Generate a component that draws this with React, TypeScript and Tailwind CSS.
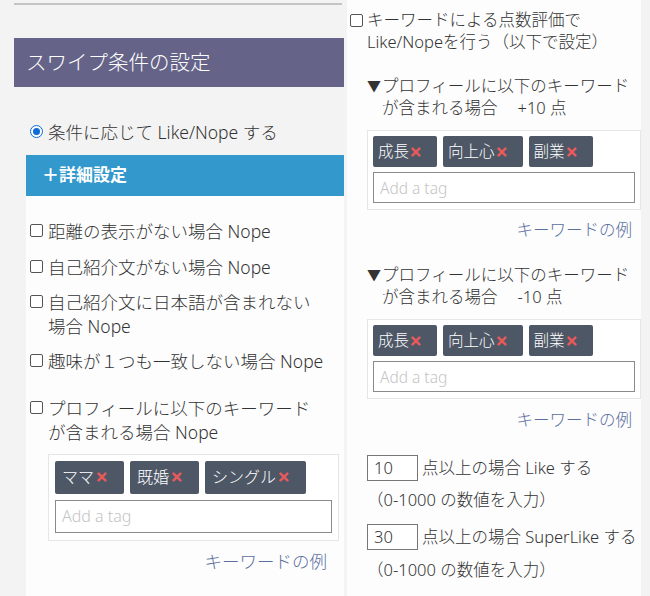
import React from "react";

const FONT = '"Noto Sans", "Noto Sans CJK JP", "Liberation Sans", sans-serif';

function XMark() {
  return (
    <svg width="10" height="10" viewBox="0 0 10 10" className="shrink-0">
      <path d="M1.6 1.6 L8.4 8.4 M8.4 1.6 L1.6 8.4" stroke="#e65a5c" strokeWidth="2.6" strokeLinecap="round" />
    </svg>
  );
}

function Tag({ label, big }: { label: string; big?: boolean }) {
  return (
    <div
      className={
        big
          ? "flex h-[33px] items-center gap-[3px] rounded-[2px] bg-[#4d5766] pl-[7px] pr-[17px] text-[16px] leading-none text-white"
          : "flex h-[31px] items-center gap-[2px] rounded-[2px] bg-[#4d5766] pl-[5px] pr-[16px] text-[15.5px] leading-none text-white"
      }
    >
      <span>{label}</span>
      <XMark />
    </div>
  );
}

function Checkbox() {
  return <span className="inline-block h-[13px] w-[13px] shrink-0 rounded-[2px] border border-[#555] bg-white" />;
}

function LeftItem({ lines, className = "" }: { lines: string[]; className?: string }) {
  return (
    <div className={"flex items-start pl-[4px] " + className}>
      <div className="flex h-[24px] items-center">
        <Checkbox />
      </div>
      <div className="ml-[5px] flex flex-col text-[17.5px] leading-[24px] text-[#333]">
        {lines.map((l) => (
          <div key={l}>{l}</div>
        ))}
      </div>
    </div>
  );
}

function TagBox({ tags, big }: { tags: string[]; big?: boolean }) {
  return (
    <div
      className={
        big
          ? "flex flex-col gap-[6px] border border-[#e6e6e6] bg-white px-[6px] pb-[7px] pt-[6px]"
          : "flex flex-col gap-[5px] border border-[#e6e6e6] bg-white px-[5px] pb-[6px] pt-[5px]"
      }
    >
      <div className="flex gap-[6px]">
        {tags.map((t) => (
          <Tag key={t} label={t} big={big} />
        ))}
      </div>
      <div
        className={
          big
            ? "flex h-[33px] items-center border-[1.5px] border-[#8a8a8a] bg-white pl-[6px] text-[16px] text-[#c4c4c4]"
            : "flex h-[31px] items-center border-[1.5px] border-[#8a8a8a] bg-white pl-[6px] text-[15.5px] text-[#c4c4c4]"
        }
      >
        Add a tag
      </div>
    </div>
  );
}

function Section({ score }: { score: string }) {
  return (
    <div className="flex text-[16.5px] leading-[22px] text-[#333]">
      <div className="w-[15px] shrink-0 text-[14px]">▼</div>
      <div className="flex flex-col">
        <div>プロフィールに以下のキーワード</div>
        <div>
          が含まれる場合<span className="ml-[20px]">{score} 点</span>
        </div>
      </div>
    </div>
  );
}

export default function App() {
  return (
    <div className="flex h-[596px] w-[650px] overflow-hidden bg-[#f3f3f3] font-light" style={{ fontFamily: FONT }}>
      {/* Left column */}
      <div className="flex w-[345px] shrink-0 flex-col pl-[14px] pr-[1px]">
        <div className="mr-[2px] mt-[3px] h-[1.5px] bg-[#c4c4c4]" />
        <div className="mt-[33px] flex h-[49px] items-center bg-[#656488] pl-[12px] text-[20.5px] text-white">
          スワイプ条件の設定
        </div>
        <div className="flex flex-1 flex-col pl-[12px]">
          <div className="mt-[33px] flex h-[24px] items-center pl-[4px]">
            <span className="flex h-[13px] w-[13px] items-center justify-center rounded-full border-[1.5px] border-[#0b6bd8] bg-white">
              <span className="h-[7px] w-[7px] rounded-full bg-[#0b6bd8]" />
            </span>
            <span className="ml-[5px] text-[17.5px] leading-[24px] text-[#333]">条件に応じて Like/Nope する</span>
          </div>
          <div className="mt-[11px] flex h-[41px] items-center bg-[#3398cc] pl-[16px] text-[17px] font-bold text-white">
            ＋詳細設定
          </div>
          <div className="flex flex-1 flex-col bg-[#fdfdfd] pt-[23px]">
            <LeftItem lines={["距離の表示がない場合 Nope"]} />
            <LeftItem className="mt-[12px]" lines={["自己紹介文がない場合 Nope"]} />
            <LeftItem className="mt-[11px]" lines={["自己紹介文に日本語が含まれない", "場合 Nope"]} />
            <LeftItem className="mt-[11px]" lines={["趣味が１つも一致しない場合 Nope"]} />
            <LeftItem className="mt-[23px]" lines={["プロフィールに以下のキーワード", "が含まれる場合 Nope"]} />
            <div className="ml-[22px] mr-[5px] mt-[10px]">
              <TagBox tags={["ママ", "既婚", "シングル"]} big />
            </div>
            <div className="mt-[8px] pr-[17px] text-right text-[17.5px] leading-[24px] text-[#5b6f9f]">
              キーワードの例
            </div>
          </div>
        </div>
      </div>

      {/* Right column */}
      <div className="ml-[2px] flex w-[294px] shrink-0 flex-col bg-[#fdfdfd] pl-[3px] pt-[9px] text-[16.5px] leading-[22px] text-[#333]">
        <div className="flex items-start">
          <div className="flex h-[22px] items-center">
            <Checkbox />
          </div>
          <div className="ml-[4px] flex flex-col">
            <div>キーワードによる点数評価で</div>
            <div>Like/Nopeを行う（以下で設定）</div>
          </div>
        </div>
        <div className="flex flex-col pl-[17px]">
          <div className="mt-[22px]">
            <Section score="+10" />
          </div>
          <div className="mt-[11px]">
            <TagBox tags={["成長", "向上心", "副業"]} />
          </div>
          <div className="mt-[9px] pr-[9px] text-right text-[#5b6f9f]">キーワードの例</div>
          <div className="mt-[23px]">
            <Section score="-10" />
          </div>
          <div className="mt-[11px]">
            <TagBox tags={["成長", "向上心", "副業"]} />
          </div>
          <div className="mt-[10px] pr-[9px] text-right text-[#5b6f9f]">キーワードの例</div>
          <div className="mt-[24px] flex h-[26px] items-center">
            <div className="flex h-[26px] w-[51px] items-center border border-[#777] bg-white pl-[6px]">10</div>
            <span className="ml-[4px]">点以上の場合 Like する</span>
          </div>
          <div className="mt-[8px]">（0-1000 の数値を入力）</div>
          <div className="mt-[13px] flex h-[26px] items-center">
            <div className="flex h-[26px] w-[51px] items-center border border-[#777] bg-white pl-[6px]">30</div>
            <span className="ml-[4px]">点以上の場合 SuperLike する</span>
          </div>
          <div className="mt-[9px]">（0-1000 の数値を入力）</div>
        </div>
      </div>
    </div>
  );
}
